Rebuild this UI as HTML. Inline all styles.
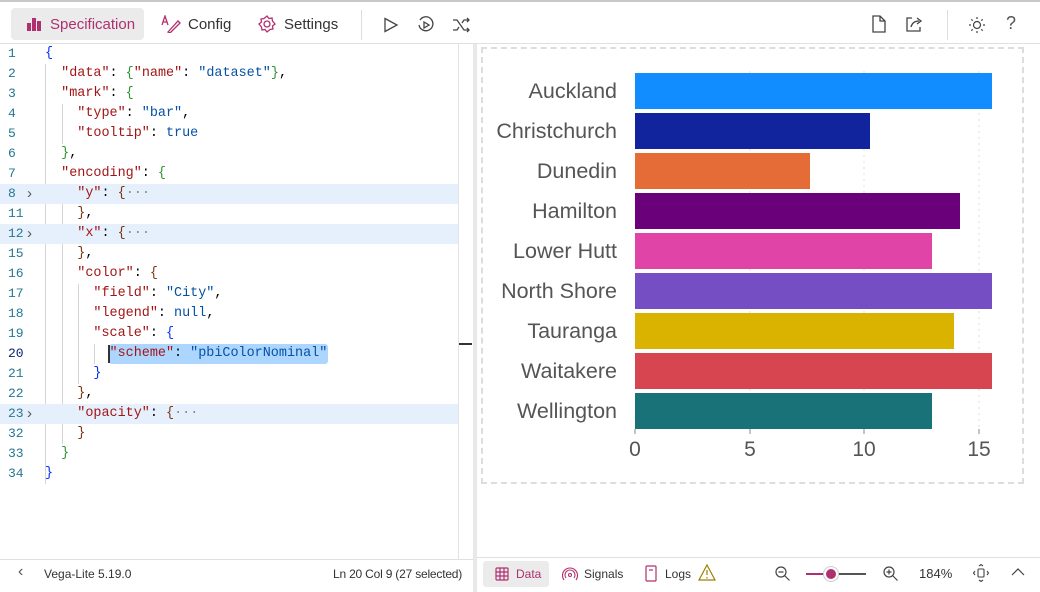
<!DOCTYPE html>
<html><head><style>
*{margin:0;padding:0;box-sizing:border-box}
body{width:1040px;height:592px;overflow:hidden;background:#fff;font-family:"Liberation Sans",sans-serif;position:relative}
.tb{position:absolute;left:0;top:2px;width:1040px;height:42px;border-bottom:1px solid #e0e0e0}
.btn{position:absolute;top:6px;height:32px;display:flex;align-items:center;font-size:15px;color:#333}
.code{position:absolute;left:0;top:44px;width:458px;height:516px;font-family:"Liberation Mono",monospace;font-size:13.45px}
.ln{position:absolute;left:0;height:20px;line-height:20px;width:458px;white-space:pre}
.ln .n{position:absolute;left:8px;color:#237893;font-size:13px}
.ln .c{position:absolute;left:45px}
.k{color:#a31515}.s{color:#0451a5}.b1{color:#0431fa}.b2{color:#319331}.b3{color:#7b3814}.kw{color:#0451a5}.p{color:#333}
.hl{background:#e5f0fc}
.fold{position:absolute;left:27px;color:#555;font-family:"Liberation Sans";font-size:15px}
.g{position:absolute;width:1px;background:#d3d3d3}
</style></head><body>
<div style="position:absolute;left:0;top:0;width:1040px;height:2px;background:#c8c8c8"></div>
<div class="tb">
 <div class="btn" style="left:11px;width:133px;background:#ebebeb;border-radius:4px;color:#b0306f;padding-left:16px">
  <svg width="14" height="14" viewBox="0 0 14 14" style="margin-right:9px"><rect x="0" y="6" width="4" height="8" fill="#b0306f"/><rect x="5" y="1" width="4" height="13" fill="#b0306f"/><rect x="10" y="4" width="4" height="10" fill="#b0306f"/></svg>Specification</div>
 <div class="btn" style="left:161px"><svg width="20" height="18" viewBox="0 0 20 18" style="margin-right:7px" fill="none" stroke="#b0306f" stroke-width="1.3"><path d="M1 10L4 1L7 10M2 7h4"/><path d="M7 17L17 6l2 2L9 18z"/></svg>Config</div>
 <div class="btn" style="left:258px"><svg width="18" height="18" viewBox="0 0 18 18" style="margin-right:8px" fill="none" stroke="#b0306f" stroke-width="1.3"><circle cx="9" cy="9" r="3"/><path d="M9 1l2 2.5 3-.5.5 3L17 9l-2.5 2 .5 3-3 .5L9 17l-2-2.5-3 .5-.5-3L1 9l2.5-2L3 4l3-.5z"/></svg>Settings</div>
 <div style="position:absolute;left:361px;top:8px;width:1px;height:30px;background:#ddd"></div>
 <svg style="position:absolute;left:383px;top:15px" width="16" height="16" fill="none" stroke="#444" stroke-width="1.3"><path d="M2 1.5L14 8 2 14.5z"/></svg>
 <svg style="position:absolute;left:417px;top:14px" width="18" height="18" fill="none" stroke="#444" stroke-width="1.3"><path d="M3 4A7 7 0 1 1 2 9"/><path d="M7 6l5 3-5 3z"/></svg>
 <svg style="position:absolute;left:452px;top:15px" width="18" height="16" fill="none" stroke="#444" stroke-width="1.3"><path d="M1 3h4l7 10h5M1 13h4l2-3M10 6l2-3h5M15 1l2 2-2 2M15 11l2 2-2 2"/></svg>
 <svg style="position:absolute;left:872px;top:13px" width="14" height="18" fill="none" stroke="#444" stroke-width="1.3"><path d="M1 1h7l5 5v11H1z M8 1v5h5"/></svg>
 <svg style="position:absolute;left:906px;top:14px" width="18" height="16" fill="none" stroke="#444" stroke-width="1.3"><path d="M6 2H1v13h13v-4"/><path d="M5 11c1-4 4-6 8-6M11 2l4 3-4 3"/></svg>
 <div style="position:absolute;left:947px;top:8px;width:1px;height:30px;background:#ddd"></div>
 <svg style="position:absolute;left:968px;top:14px" width="18" height="18" fill="none" stroke="#444" stroke-width="1.2"><circle cx="9" cy="9" r="3.5"/><path d="M9 1v2M9 15v2M1 9h2M15 9h2M3.3 3.3l1.4 1.4M13.3 13.3l1.4 1.4M3.3 14.7l1.4-1.4M13.3 4.7l1.4-1.4"/></svg>
 <div style="position:absolute;left:1006px;top:11px;font-size:18px;color:#555">?</div>
</div>

<div class="code">
 <div class="g" style="left:45px;top:20px;height:420px"></div>
 <div class="g" style="left:62px;top:60px;height:40px"></div>
 <div class="g" style="left:62px;top:140px;height:260px"></div>
 <div class="g" style="left:78px;top:240px;height:100px"></div>
 <div class="g" style="left:94px;top:300px;height:20px"></div>
 <div class="ln" style="top:0"><span class="n">1</span><span class="c"><span class="b1">{</span></span></div>
 <div class="ln" style="top:20px"><span class="n">2</span><span class="c">  <span class="k">"data"</span>: <span class="b2">{</span><span class="k">"name"</span>: <span class="s">"dataset"</span><span class="b2">}</span>,</span></div>
 <div class="ln" style="top:40px"><span class="n">3</span><span class="c">  <span class="k">"mark"</span>: <span class="b2">{</span></span></div>
 <div class="ln" style="top:60px"><span class="n">4</span><span class="c">    <span class="k">"type"</span>: <span class="s">"bar"</span>,</span></div>
 <div class="ln" style="top:80px"><span class="n">5</span><span class="c">    <span class="k">"tooltip"</span>: <span class="kw">true</span></span></div>
 <div class="ln" style="top:100px"><span class="n">6</span><span class="c">  <span class="b2">}</span>,</span></div>
 <div class="ln" style="top:120px"><span class="n">7</span><span class="c">  <span class="k">"encoding"</span>: <span class="b2">{</span></span></div>
 <div class="ln hl" style="top:140px"><span class="n">8</span><span class="fold">&#x203A;</span><span class="c">    <span class="k">"y"</span>: <span class="b3">{</span><span style="color:#888">&middot;&middot;&middot;</span></span></div>
 <div class="ln" style="top:160px"><span class="n">11</span><span class="c">    <span class="b3">}</span>,</span></div>
 <div class="ln hl" style="top:180px"><span class="n">12</span><span class="fold">&#x203A;</span><span class="c">    <span class="k">"x"</span>: <span class="b3">{</span><span style="color:#888">&middot;&middot;&middot;</span></span></div>
 <div class="ln" style="top:200px"><span class="n">15</span><span class="c">    <span class="b3">}</span>,</span></div>
 <div class="ln" style="top:220px"><span class="n">16</span><span class="c">    <span class="k">"color"</span>: <span class="b3">{</span></span></div>
 <div class="ln" style="top:240px"><span class="n">17</span><span class="c">      <span class="k">"field"</span>: <span class="s">"City"</span>,</span></div>
 <div class="ln" style="top:260px"><span class="n">18</span><span class="c">      <span class="k">"legend"</span>: <span class="kw">null</span>,</span></div>
 <div class="ln" style="top:280px"><span class="n">19</span><span class="c">      <span class="k">"scale"</span>: <span class="b1">{</span></span></div>
 <div style="position:absolute;left:109px;top:300px;width:219px;height:20px;background:#add6ff;border-radius:3px"></div>
 <div style="position:absolute;left:108px;top:301px;width:2px;height:18px;background:#333"></div>
 <div class="ln" style="top:300px"><span class="n" style="color:#0b216f">20</span><span class="c">        <span class="k">"scheme"</span>: <span class="s">"pbiColorNominal"</span></span></div>
 <div class="ln" style="top:320px"><span class="n">21</span><span class="c">      <span class="b1">}</span></span></div>
 <div class="ln" style="top:340px"><span class="n">22</span><span class="c">    <span class="b3">}</span>,</span></div>
 <div class="ln hl" style="top:360px"><span class="n">23</span><span class="fold">&#x203A;</span><span class="c">    <span class="k">"opacity"</span>: <span class="b3">{</span><span style="color:#888">&middot;&middot;&middot;</span></span></div>
 <div class="ln" style="top:380px"><span class="n">32</span><span class="c">    <span class="b3">}</span></span></div>
 <div class="ln" style="top:400px"><span class="n">33</span><span class="c">  <span class="b2">}</span></span></div>
 <div class="ln" style="top:420px"><span class="n">34</span><span class="c"><span class="b1">}</span></span></div>
</div>
<div style="position:absolute;left:458px;top:44px;width:1px;height:516px;background:#e3e3e3"></div>
<div style="position:absolute;left:459px;top:343px;width:13px;height:2px;background:#333"></div>
<div style="position:absolute;left:473px;top:44px;width:4px;height:548px;background:#e8e8e8"></div>

<div style="position:absolute;left:481px;top:47px;width:543px;height:437px;border:2px dashed #ddd"></div>
<svg style="position:absolute;left:0;top:0" width="1040" height="592" font-family="Liberation Sans, sans-serif">
 <g stroke="#ddd" stroke-dasharray="2,4"><line x1="750" y1="71" x2="750" y2="428"/><line x1="864" y1="71" x2="864" y2="428"/><line x1="979" y1="71" x2="979" y2="428"/></g>
 <rect x="635" y="73" width="357" height="36" fill="#118dff"/>
 <rect x="635" y="113" width="235" height="36" fill="#12239e"/>
 <rect x="635" y="153" width="175" height="36" fill="#e66c37"/>
 <rect x="635" y="193" width="325" height="36" fill="#6b007b"/>
 <rect x="635" y="233" width="297" height="36" fill="#e044a7"/>
 <rect x="635" y="273" width="357" height="36" fill="#744ec2"/>
 <rect x="635" y="313" width="319" height="36" fill="#d9b300"/>
 <rect x="635" y="353" width="357" height="36" fill="#d64550"/>
 <rect x="635" y="393" width="297" height="36" fill="#197278"/>
 <g stroke="#888"><line x1="635" y1="429" x2="635" y2="434"/><line x1="750" y1="429" x2="750" y2="434"/><line x1="864" y1="429" x2="864" y2="434"/><line x1="979" y1="429" x2="979" y2="434"/></g>
 <g fill="#555" font-size="21.5" text-anchor="end">
  <text x="617" y="98">Auckland</text><text x="617" y="138">Christchurch</text><text x="617" y="178">Dunedin</text><text x="617" y="218">Hamilton</text><text x="617" y="258">Lower Hutt</text><text x="617" y="298">North Shore</text><text x="617" y="338">Tauranga</text><text x="617" y="378">Waitakere</text><text x="617" y="418">Wellington</text>
 </g>
 <g fill="#555" font-size="21" text-anchor="middle"><text x="635" y="456">0</text><text x="750" y="456">5</text><text x="864" y="456">10</text><text x="979" y="456">15</text></g>
</svg>

<div style="position:absolute;left:0;top:559px;width:473px;height:1px;background:#e0e0e0"></div>
<div style="position:absolute;left:477px;top:557px;width:563px;height:1px;background:#e0e0e0"></div>
<div style="position:absolute;left:18px;top:563px;font-size:16px;color:#555">&#x2039;</div>
<div style="position:absolute;left:44px;top:567px;font-size:12px;color:#333">Vega-Lite 5.19.0</div>
<div style="position:absolute;left:333px;top:567px;font-size:12px;color:#333;letter-spacing:-0.2px">Ln 20 Col 9 (27 selected)</div>
<div style="position:absolute;left:483px;top:561px;width:66px;height:26px;background:#ebebeb;border-radius:3px"></div>
<svg style="position:absolute;left:495px;top:567px" width="14" height="14" fill="none" stroke="#b0306f" stroke-width="1.2"><rect x="1" y="1" width="12" height="12" rx="1"/><path d="M1 5h12M1 9h12M5 1v12M9 1v12"/></svg>
<div style="position:absolute;left:516px;top:567px;font-size:12px;color:#b0306f">Data</div>
<svg style="position:absolute;left:562px;top:566px" width="16" height="16" fill="none" stroke="#b0306f" stroke-width="1.1"><circle cx="8" cy="9" r="1.5"/><path d="M4 12a5 5 0 1 1 8 0M2 14a7.5 7.5 0 1 1 12 0"/></svg>
<div style="position:absolute;left:584px;top:567px;font-size:12px;color:#333">Signals</div>
<svg style="position:absolute;left:644px;top:565px" width="14" height="18" fill="none" stroke="#b0306f" stroke-width="1.2"><rect x="2" y="1" width="10" height="15" rx="1"/><path d="M5 5h4"/></svg>
<div style="position:absolute;left:665px;top:567px;font-size:12px;color:#333">Logs</div>
<svg style="position:absolute;left:698px;top:564px" width="18" height="17" fill="none" stroke="#9a8000" stroke-width="1.2"><path d="M9 1L17 16H1z M9 6v5M9 13v1.5"/></svg>
<svg style="position:absolute;left:775px;top:566px" width="16" height="16" fill="none" stroke="#444" stroke-width="1.2"><circle cx="6" cy="6" r="5"/><path d="M9.5 9.5l5 5M3.5 6h5"/></svg>
<div style="position:absolute;left:806px;top:573px;width:20px;height:2px;background:#b0306f"></div>
<div style="position:absolute;left:836px;top:573px;width:30px;height:2px;background:#555"></div>
<div style="position:absolute;left:824px;top:567px;width:14px;height:14px;border-radius:50%;background:#b0306f;border:2px solid #fff;box-shadow:0 0 0 1px #ccc"></div>
<svg style="position:absolute;left:883px;top:566px" width="16" height="16" fill="none" stroke="#444" stroke-width="1.2"><circle cx="6" cy="6" r="5"/><path d="M9.5 9.5l5 5M3.5 6h5M6 3.5v5"/></svg>
<div style="position:absolute;left:919px;top:566px;font-size:13px;color:#333">184%</div>
<svg style="position:absolute;left:972px;top:564px" width="18" height="18" fill="none" stroke="#444" stroke-width="1.1"><rect x="6" y="5" width="6" height="8" rx="1"/><path d="M7 2l2-1.5 2 1.5M7 16l2 1.5 2-1.5M3 7L1.5 9 3 11M15 7l1.5 2L15 11"/></svg>
<svg style="position:absolute;left:1011px;top:567px" width="14" height="10" fill="none" stroke="#444" stroke-width="1.2"><path d="M1 8l6-6 6 6"/></svg>
</body></html>
